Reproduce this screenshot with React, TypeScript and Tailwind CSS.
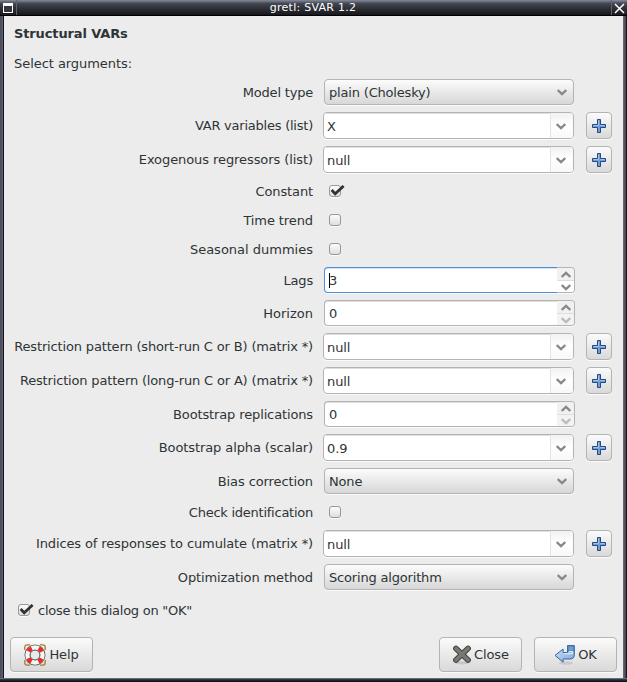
import React from "react";

type Kind = "select" | "combo" | "check" | "spin";
interface Field {
  label: string;
  kind: Kind;
  tracking: string;
  value?: string;
  checked?: boolean;
  focused?: boolean;
}

const fields: Field[] = [
  { label: "Model type", kind: "select", value: "plain (Cholesky)", tracking: "tracking-[-0.2px]" },
  { label: "VAR variables (list)", kind: "combo", value: "X", tracking: "tracking-[-0.23px]" },
  { label: "Exogenous regressors (list)", kind: "combo", value: "null", tracking: "tracking-[-0.08px]" },
  { label: "Constant", kind: "check", checked: true, tracking: "tracking-[-0.12px]" },
  { label: "Time trend", kind: "check", tracking: "tracking-[-0.1px]" },
  { label: "Seasonal dummies", kind: "check", tracking: "tracking-normal" },
  { label: "Lags", kind: "spin", value: "3", focused: true, tracking: "tracking-[-0.2px]" },
  { label: "Horizon", kind: "spin", value: "0", tracking: "tracking-normal" },
  { label: "Restriction pattern (short-run C or B) (matrix *)", kind: "combo", value: "null", tracking: "tracking-[-0.155px]" },
  { label: "Restriction pattern (long-run C or A) (matrix *)", kind: "combo", value: "null", tracking: "tracking-[-0.165px]" },
  { label: "Bootstrap replications", kind: "spin", value: "0", tracking: "tracking-[-0.13px]" },
  { label: "Bootstrap alpha (scalar)", kind: "combo", value: "0.9", tracking: "tracking-[-0.1px]" },
  { label: "Bias correction", kind: "select", value: "None", tracking: "tracking-[-0.1px]" },
  { label: "Check identification", kind: "check", tracking: "tracking-[-0.25px]" },
  { label: "Indices of responses to cumulate (matrix *)", kind: "combo", value: "null", tracking: "tracking-[-0.115px]" },
  { label: "Optimization method", kind: "select", value: "Scoring algorithm", tracking: "tracking-[-0.12px]" },
];

const Chevron = ({ up = false, color = "#888a85" }: { up?: boolean; color?: string }) => (
  <svg width="10" height="7" viewBox="0 0 10 7" className={up ? "rotate-180" : ""}>
    <path d="M.7 1 L5 5.1 L9.3 1" fill="none" stroke={color} strokeWidth="2.3" />
  </svg>
);

const Check = ({ checked }: { checked?: boolean }) => (
  <span className="relative block h-3 w-3 shrink-0 rounded-[3px] border border-[#989898] bg-linear-to-b from-[#fcfcfc] to-[#dedede] shadow-[0_1px_0_#fafafa]">
    {checked && (
      <svg className="absolute -top-px left-0" width="15" height="12" viewBox="0 0 15 12">
        <path d="M1.6 5 L5.2 8.8 L13.6 0.9" fill="none" stroke="#2e3436" strokeWidth="2.7" />
      </svg>
    )}
  </span>
);

const Plus = () => (
  <div className="ml-3 flex h-[27px] w-[26px] items-center justify-center rounded-[4px] border border-[#b4b4b4] bg-linear-to-b from-[#fbfbfb] to-[#d9d9d9] shadow-[0_1px_0_#fafafa]">
    <svg width="14" height="14" viewBox="0 0 14 14">
      <path d="M5.5 .5h3v5h5v3h-5v5h-3v-5h-5v-3h5z" fill="#729fcf" stroke="#204a87" />
      <path d="M6.5 1.5v5h-5M8.5 6.5h4" fill="none" stroke="#a5c3e2" />
    </svg>
  </div>
);

function Control({ f }: { f: Field }) {
  if (f.kind === "check")
    return (
      <div className="flex h-[22px] items-center pl-1.5">
        <Check checked={f.checked} />
      </div>
    );
  if (f.kind === "select")
    return (
      <div className="ml-px flex h-[26px] w-[250px] items-center justify-between rounded-[4px] border border-[#b4b4b4] bg-linear-to-b from-[#fcfcfc] to-[#d7d7d7] pr-1.5 pl-1 shadow-[0_1px_0_#fafafa]">
        <span className="pt-0.5 tracking-[-0.18px]">{f.value}</span>
        <Chevron />
      </div>
    );
  if (f.kind === "combo")
    return (
      <>
        <div className="flex h-[27px] w-[251px] overflow-hidden rounded-[4px] border border-[#b4b4b4] bg-white shadow-[0_1px_0_#fafafa]">
          <span className="flex flex-1 items-center pt-0.5 pl-[3px] tracking-[-0.1px] shadow-[inset_0_1px_0_#dedede]">{f.value}</span>
          <span className="flex w-[23px] items-center justify-center border-l border-[#e4e4e4] bg-linear-to-b from-[#f2f2f2] via-white to-[#f8f8f8] pt-px pr-0.5">
            <Chevron />
          </span>
        </div>
        <Plus />
      </>
    );
  return (
    <div className="ml-px flex h-[26px] w-[251px] rounded-[4px] shadow-[0_1px_0_#fafafa]">
      <div
        className={
          "flex flex-1 items-center rounded-l-[4px] border border-r-0 bg-white pl-1 " +
          (f.focused ? "border-[#4a90d9] shadow-[inset_0_1px_0_#d4e4f5]" : "border-[#b4b4b4] shadow-[inset_0_1px_0_#dedede]")
        }
      >
        {f.focused && <span className="-mr-px h-[15px] w-px bg-black" />}
        <span className="pt-0.5">{f.value}</span>
      </div>
      <div className="flex w-[18px] flex-col overflow-hidden rounded-r-[4px] border border-l-0 border-[#b4b4b4]">
        <span className="flex h-3 items-center justify-center bg-[#f1f1f1]">
          <Chevron up />
        </span>
        <span className={"flex h-3 items-center justify-center border-t border-[#dfdfdf] pt-px " + (f.focused ? "bg-white" : "bg-[#f3f3f3]")}>
          <Chevron color={f.focused ? "#888a85" : "#bcbdba"} />
        </span>
      </div>
    </div>
  );
}

const Button = ({ children, label }: { children: React.ReactNode; label: string }) => (
  <div className="flex h-[35px] w-[83px] items-center justify-center gap-0.5 rounded-[4px] border border-[#b4b4b4] bg-linear-to-b from-[#fbfbfb] to-[#d9d9d9] shadow-[0_1px_0_#fafafa]">
    {children}
    <span className="tracking-[-0.1px]">{label}</span>
  </div>
);

const Lifebuoy = () => (
  <svg width="23" height="22" viewBox="0 0 23 22">
    <g fill="none" stroke="#a87a32" strokeWidth="1.3">
      <path d="M.8 6V3.2Q.8.8 3.2.8H6M16 .8h2.8q2.4 0 2.4 2.4V6M.8 16v2.8q0 2.4 2.4 2.4H6M16 21.2h2.8q2.4 0 2.4-2.4V16" />
    </g>
    <circle cx="11" cy="11" r="7.5" fill="none" stroke="#5e605c" strokeWidth="6" />
    <circle cx="11" cy="11" r="7.5" fill="none" stroke="#f6f6f4" strokeWidth="4.4" />
    <circle cx="11" cy="11" r="7.5" fill="none" stroke="#ef2929" strokeWidth="4.4" strokeDasharray="4.6 7.181" strokeDashoffset="-3.59" />
    <circle cx="11" cy="11" r="4.9" fill="#e9e9e9" stroke="#5e605c" />
  </svg>
);

const CloseIcon = () => (
  <svg width="20" height="22" viewBox="0 0 20 22">
    <ellipse cx="10" cy="18.8" rx="7" ry="1.6" fill="#c6c6c6" />
    <path d="M4 4.5 L16 16M16 4.5 L4 16" stroke="#41443f" strokeWidth="5.8" strokeLinecap="round" />
    <path d="M4 4.5 L16 16M16 4.5 L4 16" stroke="#777a73" strokeWidth="3.8" strokeLinecap="round" />
  </svg>
);

const Enter = () => (
  <svg width="22" height="22" viewBox="0 0 22 22">
    <defs>
      <linearGradient id="enter" x1="0" y1="0" x2="1" y2="1">
        <stop offset="0" stopColor="#d5e5f5" />
        <stop offset="1" stopColor="#78a6d8" />
      </linearGradient>
    </defs>
    <ellipse cx="12" cy="19" rx="7" ry="1.7" fill="#cacaca" />
    <path d="M13.5 1.5h6.8v9.3q0 4.2-4.2 4.2h-7v3.2L1 11.4l8.1-6.3v3.4h4.4z" fill="url(#enter)" stroke="#3465a4" strokeLinejoin="round" />
    <path d="M14 2h5.8v5h-5.8z" fill="#729fcf" stroke="#4678b4" />
    <path d="M15 7.5h3.5v2.2H10" fill="none" stroke="#e6f0fa" />
  </svg>
);

export default function App() {
  return (
    <div className="flex h-[682px] w-[627px] flex-col overflow-hidden bg-[#ececec] font-['DejaVu_Sans',sans-serif] text-[13px] leading-4 whitespace-pre text-[#2e3436]">
      <header className="flex h-4 shrink-0 border-b border-black bg-linear-to-b from-[#858a9d] via-[#41444d] via-25% to-[#17181d] text-white">
        <span className="flex w-[17px] items-center justify-center border-r border-[#5f6370] pt-px">
          <span className="h-[10px] w-[10px] border border-t-[3px] border-white bg-[#33363e]" />
        </span>
        <span className="flex-1 pt-px pr-0.5 text-center text-[11px] leading-[14px] tracking-[0.26px]">gretl: SVAR 1.2</span>
        <span className="flex w-4 items-center justify-center border-l border-[#5f6370] pt-px">
          <svg width="11" height="11" viewBox="0 0 11 11">
            <path d="M1 1l9 9M10 1l-9 9" stroke="#fff" strokeWidth="1.5" />
          </svg>
        </span>
      </header>
      <div className="flex min-h-0 flex-1">
        <div className="w-1 shrink-0 border-r border-[#15161b] bg-linear-to-r from-[#4a4d58] to-[#5d6170]" />
        <main className="flex flex-1 flex-col">
          <h1 className="mt-2.5 pl-2.5 font-bold tracking-[-0.13px]">Structural VARs</h1>
          <p className="mt-3.5 pl-2.5 tracking-[-0.05px]">Select arguments:</p>
          <div className="mt-[7px] flex flex-col gap-[7px]">
            {fields.map((f) => (
              <div key={f.label} className="flex items-center">
                <span className={"mr-2.5 w-[309px] text-right " + f.tracking + (f.kind === "combo" ? "" : " pt-0.5")}>{f.label}</span>
                <Control f={f} />
              </div>
            ))}
          </div>
          <div className="mt-3 flex h-4 items-center gap-2 pl-3.5">
            <Check checked />
            <span className="pt-0.5 tracking-[-0.25px]">close this dialog on "OK"</span>
          </div>
          <div className="mt-[19px] flex pl-1.5">
            <Button label="Help">
              <Lifebuoy />
            </Button>
            <div className="mr-1.5 ml-auto flex gap-3">
              <Button label="Close">
                <CloseIcon />
              </Button>
              <Button label="OK">
                <Enter />
              </Button>
            </div>
          </div>
        </main>
        <div className="w-1 shrink-0 border-r border-[#15161b] bg-linear-to-r from-[#6a6e7c] to-[#3b3e48]" />
      </div>
      <footer className="h-1 shrink-0 border-t border-[#6a6e7c] bg-linear-to-b from-[#3b3e48] to-[#0b0b10]" />
    </div>
  );
}
